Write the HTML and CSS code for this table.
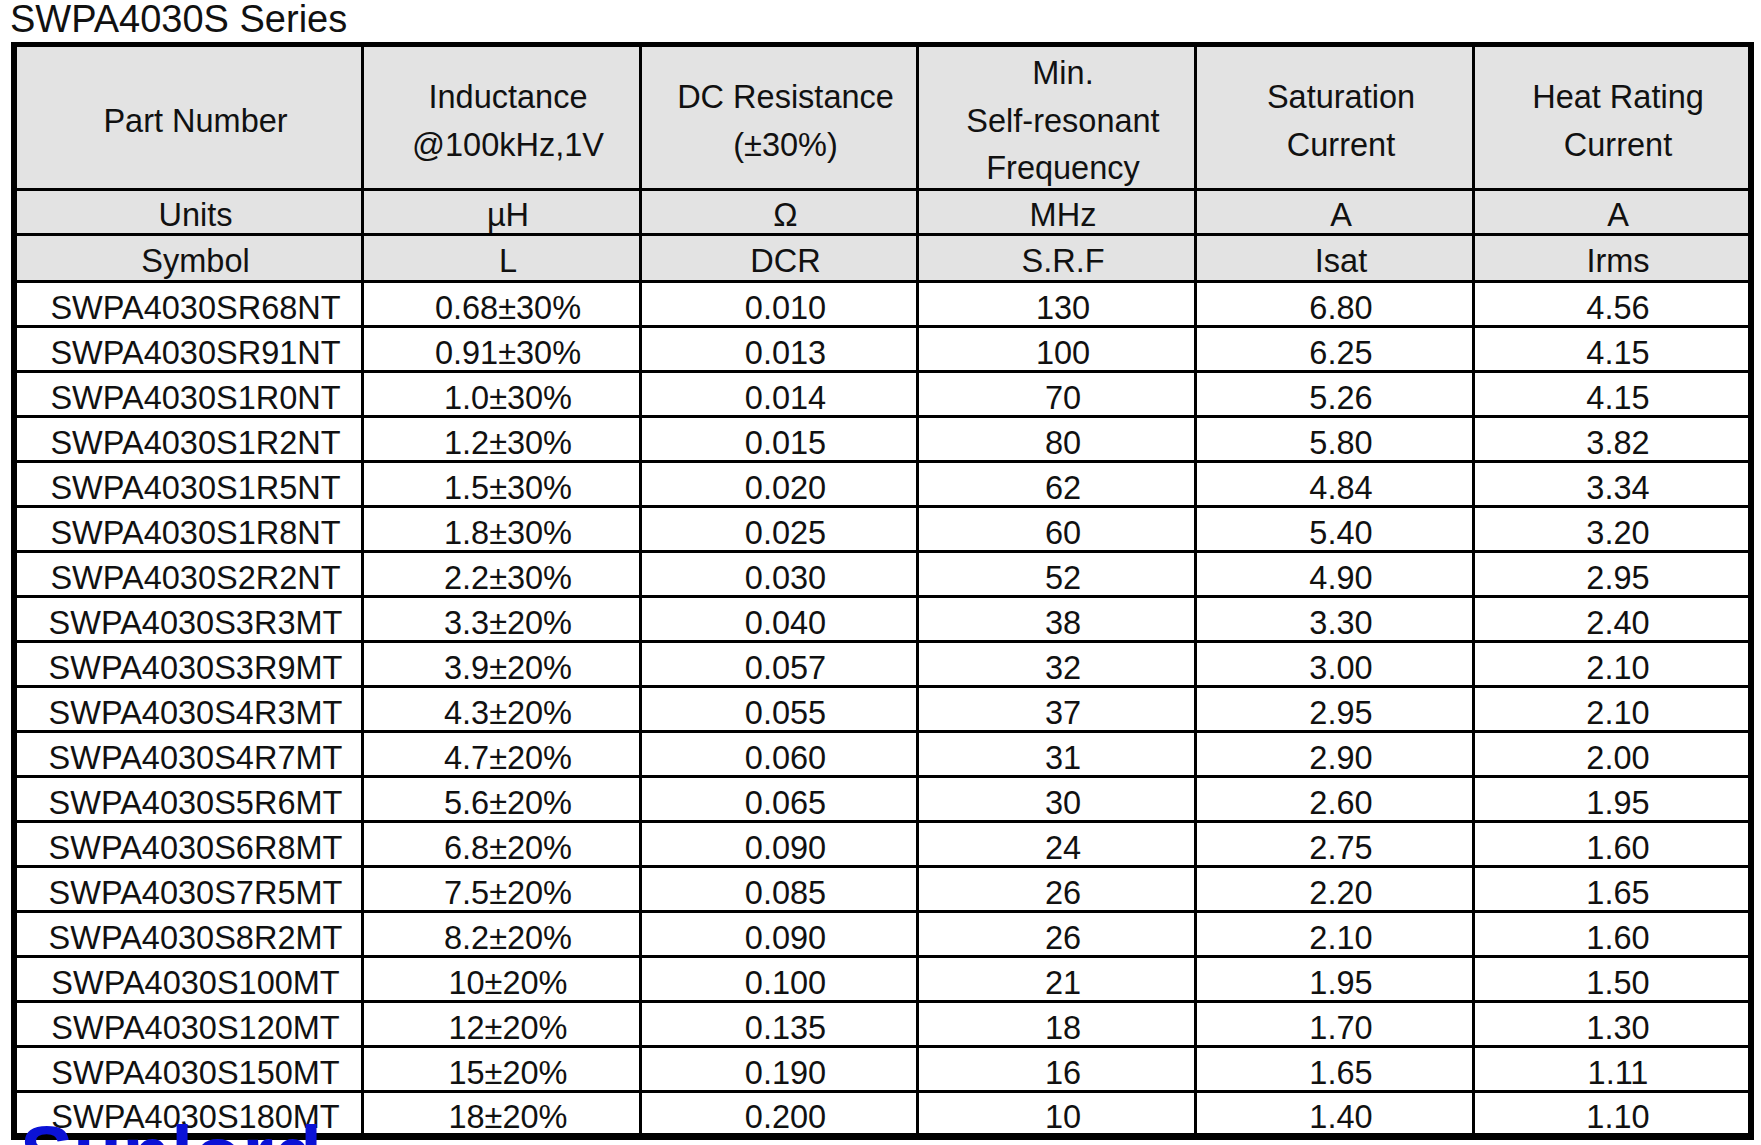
FILE: index.html
```html
<!DOCTYPE html>
<html lang="en">
<head>
<meta charset="utf-8">
<title>SWPA4030S Series</title>
<link rel="stylesheet" href="styles.css">
</head>
<body>
<h1 class="title">SWPA4030S Series</h1>
<div class="spec">
  <div class="c h">Part Number</div>
  <div class="c h">Inductance<br>@100kHz,1V</div>
  <div class="c h">DC Resistance<br>(±30%)</div>
  <div class="c h">Min.<br>Self-resonant<br>Frequency</div>
  <div class="c h">Saturation<br>Current</div>
  <div class="c h">Heat Rating<br>Current</div>

  <div class="c h">Units</div><div class="c h">µH</div><div class="c h">Ω</div><div class="c h">MHz</div><div class="c h">A</div><div class="c h">A</div>
  <div class="c h">Symbol</div><div class="c h">L</div><div class="c h">DCR</div><div class="c h">S.R.F</div><div class="c h">Isat</div><div class="c h">Irms</div>

  <div class="c">SWPA4030SR68NT</div><div class="c">0.68±30%</div><div class="c">0.010</div><div class="c">130</div><div class="c">6.80</div><div class="c">4.56</div>
  <div class="c">SWPA4030SR91NT</div><div class="c">0.91±30%</div><div class="c">0.013</div><div class="c">100</div><div class="c">6.25</div><div class="c">4.15</div>
  <div class="c">SWPA4030S1R0NT</div><div class="c">1.0±30%</div><div class="c">0.014</div><div class="c">70</div><div class="c">5.26</div><div class="c">4.15</div>
  <div class="c">SWPA4030S1R2NT</div><div class="c">1.2±30%</div><div class="c">0.015</div><div class="c">80</div><div class="c">5.80</div><div class="c">3.82</div>
  <div class="c">SWPA4030S1R5NT</div><div class="c">1.5±30%</div><div class="c">0.020</div><div class="c">62</div><div class="c">4.84</div><div class="c">3.34</div>
  <div class="c">SWPA4030S1R8NT</div><div class="c">1.8±30%</div><div class="c">0.025</div><div class="c">60</div><div class="c">5.40</div><div class="c">3.20</div>
  <div class="c">SWPA4030S2R2NT</div><div class="c">2.2±30%</div><div class="c">0.030</div><div class="c">52</div><div class="c">4.90</div><div class="c">2.95</div>
  <div class="c">SWPA4030S3R3MT</div><div class="c">3.3±20%</div><div class="c">0.040</div><div class="c">38</div><div class="c">3.30</div><div class="c">2.40</div>
  <div class="c">SWPA4030S3R9MT</div><div class="c">3.9±20%</div><div class="c">0.057</div><div class="c">32</div><div class="c">3.00</div><div class="c">2.10</div>
  <div class="c">SWPA4030S4R3MT</div><div class="c">4.3±20%</div><div class="c">0.055</div><div class="c">37</div><div class="c">2.95</div><div class="c">2.10</div>
  <div class="c">SWPA4030S4R7MT</div><div class="c">4.7±20%</div><div class="c">0.060</div><div class="c">31</div><div class="c">2.90</div><div class="c">2.00</div>
  <div class="c">SWPA4030S5R6MT</div><div class="c">5.6±20%</div><div class="c">0.065</div><div class="c">30</div><div class="c">2.60</div><div class="c">1.95</div>
  <div class="c">SWPA4030S6R8MT</div><div class="c">6.8±20%</div><div class="c">0.090</div><div class="c">24</div><div class="c">2.75</div><div class="c">1.60</div>
  <div class="c">SWPA4030S7R5MT</div><div class="c">7.5±20%</div><div class="c">0.085</div><div class="c">26</div><div class="c">2.20</div><div class="c">1.65</div>
  <div class="c">SWPA4030S8R2MT</div><div class="c">8.2±20%</div><div class="c">0.090</div><div class="c">26</div><div class="c">2.10</div><div class="c">1.60</div>
  <div class="c">SWPA4030S100MT</div><div class="c">10±20%</div><div class="c">0.100</div><div class="c">21</div><div class="c">1.95</div><div class="c">1.50</div>
  <div class="c">SWPA4030S120MT</div><div class="c">12±20%</div><div class="c">0.135</div><div class="c">18</div><div class="c">1.70</div><div class="c">1.30</div>
  <div class="c">SWPA4030S150MT</div><div class="c">15±20%</div><div class="c">0.190</div><div class="c">16</div><div class="c">1.65</div><div class="c">1.11</div>
  <div class="c">SWPA4030S180MT</div><div class="c">18±20%</div><div class="c">0.200</div><div class="c">10</div><div class="c">1.40</div><div class="c">1.10</div>
</div>
<div class="logo">Sunlord</div>
</body>
</html>
```

FILE: styles.css
```css
html {
  overflow: hidden;
}

body {
  margin: 0;
  background: #ffffff;
  color: #111111;
  font-family: "Liberation Sans", Arial, sans-serif;
}

.title {
  margin: 0 0 3px 0;
  padding-left: 10px;
  font-size: 38px;
  font-weight: normal;
  line-height: 39px;
  height: 39px;
}

.spec {
  margin-left: 11px;
  width: 1731px;
  display: grid;
  grid-template-columns: 344px 275px 274px 275px 275px 273px;
  grid-template-rows: 141px 42px 44px repeat(18, 42px) 40px;
  gap: 3px;
  background: #000000;
  border-style: solid;
  border-color: #000000;
  border-width: 5px 6px 7px 6px;
}

.c {
  display: flex;
  align-items: center;
  justify-content: center;
  text-align: center;
  padding: 8px 0 0 13px;
  background: #ffffff;
  font-size: 32.5px;
  line-height: 47px;
  white-space: nowrap;
}

.h {
  background: #e3e3e3;
  line-height: 47.5px;
}

.logo {
  position: absolute;
  left: 20px;
  top: 1115px;
  font-size: 80px;
  line-height: 80px;
  font-weight: bold;
  color: #0b12d6;
}
```
